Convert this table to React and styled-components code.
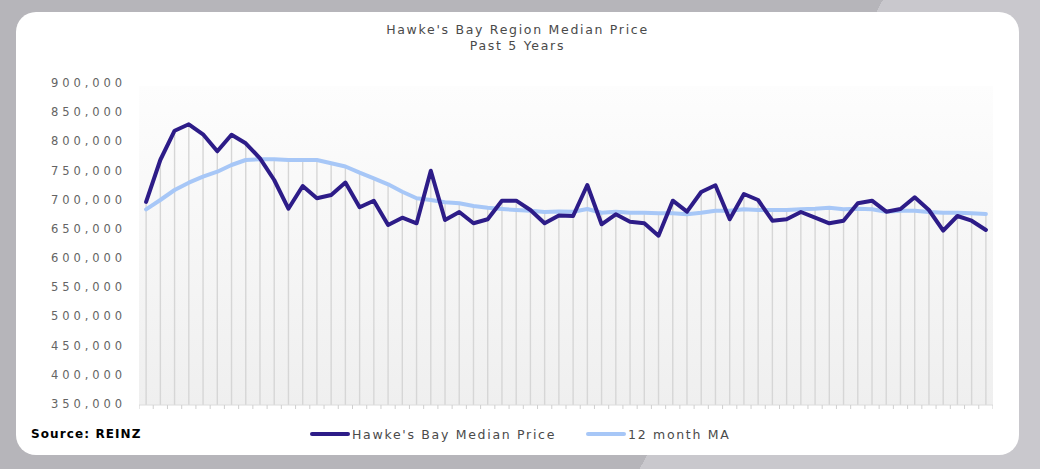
import React from 'react';
import styled, { createGlobalStyle } from 'styled-components';

const Global = createGlobalStyle`
  html, body { margin: 0; padding: 0; }
  body { width: 1040px; height: 469px; overflow: hidden; }
`;

const median = [
  697000, 768700, 818800, 829800, 812700, 783600, 812000, 797300, 771600, 734400,
  685300, 724100, 703100, 708700, 730100, 687700, 699000, 657400, 669900, 660300,
  750300, 665900, 679600, 660300, 667100, 699000, 699000, 683000, 660300, 673600,
  672800, 725900, 658600, 675700, 663000, 660300, 639000, 699000, 680100, 713900,
  725300, 667100, 710400, 700200, 664700, 667100, 679600, 669900, 660300, 664700,
  694500, 699000, 680100, 684700, 704800, 683000, 647600, 672800, 664700, 648800,
];

const ma = [
  684200, 700200, 717300, 729800, 740100, 748600, 760100, 768700, 769900, 769900,
  768700, 768700, 768700, 763000, 757500, 746900, 737300, 727100, 714400, 703100,
  700200, 696200, 694500, 689900, 687000, 684700, 683000, 681800, 679600, 680500,
  680100, 684700, 678400, 680100, 678400, 678400, 677400, 677400, 675700, 678400,
  681800, 681800, 684200, 683000, 683000, 683000, 684200, 685300, 687000, 684200,
  685300, 684200, 680100, 681800, 681800, 679600, 678400, 678400, 677400, 676200,
];

const ticks = [900000, 850000, 800000, 750000, 700000, 650000, 600000, 550000, 500000, 450000, 400000, 350000];

const PLOT_W = 854;
const SVG_H = 335;
const PLOT_TOP = 10;
const AXIS_Y = 329;
const STEP = PLOT_W / median.length;

const yFor = (v) => 7.3 + ((900000 - v) / 50000) * 29.2;
const xFor = (i) => i * STEP + STEP / 2;

const Page = styled.div`
  width: 1040px;
  height: 469px;
  box-sizing: border-box;
  padding: 12px 21px 14px 16px;
  background: linear-gradient(117.4deg, #b6b5ba 68.8%, #c9c8cd 68.8%);
`;

const Card = styled.div`
  width: 1003px;
  height: 443px;
  box-sizing: border-box;
  padding-top: 10px;
  background: #ffffff;
  border-radius: 20px;
  display: flex;
  flex-direction: column;
`;

const Title = styled.div`
  text-align: center;
  font-family: "DejaVu Sans", "Liberation Sans", sans-serif;
  font-size: 12.5px;
  line-height: 16px;
  letter-spacing: 1.7px;
  color: #4a4a4a;
`;

const ChartRow = styled.div`
  display: flex;
  gap: 17px;
  margin-top: 22px;
  height: ${SVG_H}px;
`;

const AxisLabels = styled.div`
  width: 106px;
  display: flex;
  flex-direction: column;
  justify-content: space-between;
  align-items: flex-end;
`;

const AxisLabel = styled.span`
  font-family: "DejaVu Sans", "Liberation Sans", sans-serif;
  font-size: 11.5px;
  line-height: 14px;
  letter-spacing: 3.9px;
  margin-right: -3.9px;
  color: #646464;
`;

const Plot = styled.svg`
  display: block;
  width: ${PLOT_W}px;
  height: ${SVG_H}px;
`;

const Footer = styled.div`
  display: flex;
  align-items: center;
  height: 16px;
  margin-top: 15px;
  padding-left: 15px;
`;

const Source = styled.span`
  flex: 0 0 279px;
  font-family: "DejaVu Sans", "Liberation Sans", sans-serif;
  font-weight: 700;
  font-size: 12px;
  letter-spacing: 1.1px;
  color: #000000;
`;

const Legend = styled.div`
  display: flex;
  align-items: center;
  gap: 30px;
`;

const LegendItem = styled.div`
  display: flex;
  align-items: center;
  gap: 2px;
  font-family: "DejaVu Sans", "Liberation Sans", sans-serif;
  font-size: 12.5px;
  letter-spacing: 1.7px;
  color: #4a4a4a;
`;

const Swatch = styled.span`
  width: 40px;
  height: 4px;
  border-radius: 2px;
  background: ${(p) => p.$color};
`;

const DARK = '#2d1c88';
const LIGHT = '#a7c7f7';

function Chart() {
  const darkPts = median.map((v, i) => `${xFor(i).toFixed(1)},${yFor(v).toFixed(1)}`).join(' ');
  const lightPts = ma.map((v, i) => `${xFor(i).toFixed(1)},${yFor(v).toFixed(1)}`).join(' ');
  return (
    <Plot viewBox={`0 0 ${PLOT_W} ${SVG_H}`}>
      <defs>
        <linearGradient id="plotBg" x1="0" y1="0" x2="0" y2="1">
          <stop offset="0" stopColor="#fdfdfd" />
          <stop offset="1" stopColor="#efefef" />
        </linearGradient>
      </defs>
      <rect x="0" y={PLOT_TOP} width={PLOT_W} height={AXIS_Y - PLOT_TOP} fill="url(#plotBg)" />
      {median.map((v, i) => {
        const top = Math.min(yFor(v), yFor(ma[i]));
        return (
          <line key={`d${i}`} x1={xFor(i)} x2={xFor(i)} y1={top} y2={AXIS_Y} stroke="#d6d6d6" strokeWidth="1.4" />
        );
      })}
      <line x1="0" x2={PLOT_W} y1={AXIS_Y} y2={AXIS_Y} stroke="#dcdcdc" strokeWidth="1" />
      {Array.from({ length: median.length + 1 }, (_, k) => (
        <line key={`t${k}`} x1={k * STEP} x2={k * STEP} y1={AXIS_Y} y2={AXIS_Y + 4} stroke="#cfcfcf" strokeWidth="1" />
      ))}
      <polyline points={lightPts} fill="none" stroke={LIGHT} strokeWidth="4" strokeLinejoin="round" strokeLinecap="round" />
      <polyline points={darkPts} fill="none" stroke={DARK} strokeWidth="4" strokeLinejoin="round" strokeLinecap="round" />
    </Plot>
  );
}

export default function App() {
  return (
    <>
      <Global />
      <Page>
        <Card>
          <Title>
            Hawke's Bay Region Median Price
            <br />
            Past 5 Years
          </Title>
          <ChartRow>
            <AxisLabels>
              {ticks.map((t) => (
                <AxisLabel key={t}>{t.toLocaleString('en-US')}</AxisLabel>
              ))}
            </AxisLabels>
            <Chart />
          </ChartRow>
          <Footer>
            <Source>Source: REINZ</Source>
            <Legend>
              <LegendItem>
                <Swatch $color={DARK} />
                Hawke's Bay Median Price
              </LegendItem>
              <LegendItem>
                <Swatch $color={LIGHT} />
                12 month MA
              </LegendItem>
            </Legend>
          </Footer>
        </Card>
      </Page>
    </>
  );
}
